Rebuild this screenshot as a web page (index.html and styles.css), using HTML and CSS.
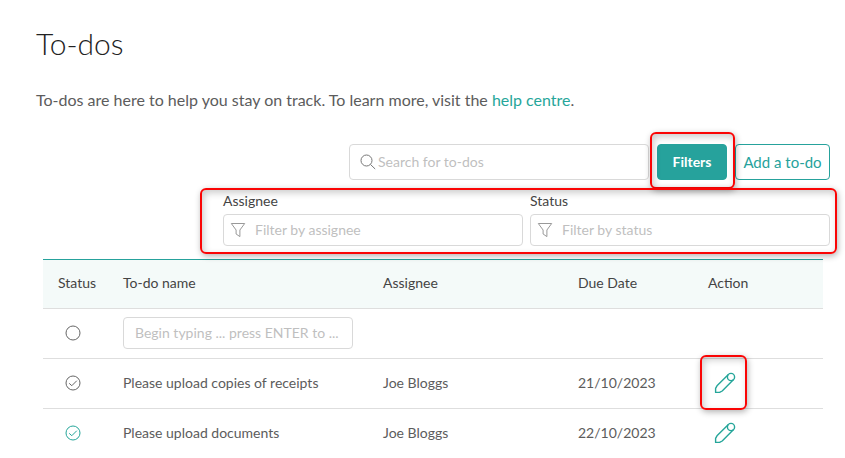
FILE: index.html
```html
<!DOCTYPE html>
<html lang="en">
<head>
  <meta charset="UTF-8" />
  <meta name="viewport" content="width=device-width, initial-scale=1.0"/>
  <title>To-dos</title>
  <link rel="stylesheet" href="styles.css">
</head>
<body>
  <!-- Shared icons -->
  <svg class="icon-defs" aria-hidden="true">
    <symbol id="funnel" viewBox="0 0 16 16">
      <path d="M1.3 1.5h13.4L9.9 8v6.6L6.1 12V8z" />
    </symbol>
    <symbol id="done" viewBox="0 0 16 16">
      <circle cx="8" cy="8" r="7" />
      <path d="M4.2 8.3l2.6 2.4 5-5" />
    </symbol>
    <symbol id="pencil" viewBox="0 0 22 22">
      <circle cx="17" cy="5" r="3.6" />
      <path d="M14.4 2.4L3 13.8 1.6 16.4v4h4L8.200 19 19.600 7.600" />
    </symbol>
  </svg>

  <div class="page">
    <h1>To-dos</h1>
    <p class="intro">To-dos are here to help you stay on track. To learn more, visit the <a href="#help">help centre</a>.</p>

    <div class="toolbar">
      <div class="field search">
        <svg class="icon" viewBox="0 0 16 16"><circle cx="6.5" cy="6.5" r="5.5" /><path d="M10.5 10.5l4.7 4.5" /></svg>
        <input type="search" placeholder="Search for to-dos" aria-label="Search for to-dos">
      </div>
      <div class="highlight highlight-button">
        <button class="btn btn-solid">Filters</button>
      </div>
      <button class="btn btn-outline">Add a to-do</button>
    </div>

    <div class="filters highlight highlight-filters">
      <div class="filter">
        <label for="assignee">Assignee</label>
        <div class="field">
          <svg class="icon"><use href="#funnel" /></svg>
          <input type="text" id="assignee" placeholder="Filter by assignee">
        </div>
      </div>
      <div class="filter">
        <label for="status">Status</label>
        <div class="field">
          <svg class="icon"><use href="#funnel" /></svg>
          <input type="text" id="status" placeholder="Filter by status">
        </div>
      </div>
    </div>

    <table>
      <thead>
        <tr>
          <th class="col-status">Status</th>
          <th class="col-name">To-do name</th>
          <th class="col-assignee">Assignee</th>
          <th class="col-date">Due Date</th>
          <th class="col-action">Action</th>
        </tr>
      </thead>
      <tbody>
        <tr>
          <td><button class="status" aria-label="New to-do"><svg viewBox="0 0 16 16"><circle cx="8" cy="8" r="7" /></svg></button></td>
          <td><div class="field new-todo"><input type="text" placeholder="Begin typing ... press ENTER to ..." aria-label="New to-do name"></div></td>
          <td></td>
          <td></td>
          <td></td>
        </tr>
        <tr>
          <td><button class="status" aria-label="Open"><svg><use href="#done" /></svg></button></td>
          <td>Please upload copies of receipts</td>
          <td>Joe Bloggs</td>
          <td>21/10/2023</td>
          <td><div class="highlight highlight-edit"><button class="edit" aria-label="Edit"><svg><use href="#pencil" /></svg></button></div></td>
        </tr>
        <tr>
          <td><button class="status complete" aria-label="Complete"><svg><use href="#done" /></svg></button></td>
          <td>Please upload documents</td>
          <td>Joe Bloggs</td>
          <td>22/10/2023</td>
          <td><button class="edit" aria-label="Edit"><svg><use href="#pencil" /></svg></button></td>
        </tr>
      </tbody>
    </table>
  </div>
</body>
</html>
```
FILE: styles.css
```css
* {
  box-sizing: border-box;
}

body {
  margin: 0;
  background: #fff;
  color: #5c5c5c;
  font-family: Lato, "Liberation Sans", sans-serif;
  font-size: 14px;
  line-height: 20px;
}

.page {
  padding: 26px 15px 0 36px;
}

h1 {
  margin: 0;
  color: #222;
  font-size: 30px;
  font-weight: 300;
  line-height: 34px;
}

.intro {
  margin: 28px 0 32px;
  font-size: 16px;
  line-height: 24px;
}

a {
  color: #26a69a;
  text-decoration: none;
}

button,
input {
  font: inherit;
}

svg {
  fill: none;
  stroke: currentColor;
}

.icon-defs {
  display: none;
}

.toolbar {
  display: flex;
  justify-content: flex-end;
  gap: 8px;
}

.field {
  display: flex;
  align-items: center;
  gap: 8px;
  height: 32px;
  padding: 0 6px;
  border: 1px solid #d9d9d9;
  border-radius: 4px;
  background: #fff;
}

.field input {
  flex: 1;
  min-width: 0;
  padding: 0;
  border: 0;
  outline: 0;
  background: none;
  color: #5c5c5c;
}

.field input::placeholder {
  color: #bfbfbf;
  opacity: 1;
}

.icon {
  flex: none;
  width: 16px;
  height: 16px;
  color: #999;
}

.search {
  width: 300px;
  height: 36px;
  padding: 0 10px;
  gap: 2px;
}

.search .icon {
  color: #777;
}

.btn {
  height: 36px;
  border: 1px solid #26a29c;
  border-radius: 4px;
  padding: 0;
  white-space: nowrap;
}

.btn-solid {
  width: 70px;
  background: #26a29c;
  color: #fff;
  font-weight: 700;
}

.btn-outline {
  width: 95px;
  background: #fff;
  color: #26a29c;
  font-size: 15px;
}

.filters {
  display: flex;
  justify-content: flex-end;
  gap: 7px;
  margin: 11px 0 13px auto;
  width: fit-content;
}

.filter {
  width: 300px;
}

.filter label {
  display: block;
  margin-bottom: 3px;
  color: #444;
}

.filter .icon {
  margin-right: 1px;
}

/* Red callout frames */
.highlight {
  position: relative;
}

.highlight::after {
  content: "";
  position: absolute;
  z-index: 1;
  border: 2px solid #fa0505;
  border-radius: 6px;
  box-shadow: 1px 2px 6px rgba(0,0,0,0.3), inset 2px 3px 7px rgba(0,0,0,0.2);
  pointer-events: none;
}

.highlight-button::after {
  inset: -12px -8px -9px -7px;
}

.highlight-filters::after {
  inset: -3px -7px -8px -23px;
}

.highlight-edit::after {
  inset: -17px -5px -16px -8px;
}

.highlight-edit {
  width: fit-content;
}

table {
  width: calc(100% - 14px);
  margin: 0 7px;
  border-collapse: collapse;
  table-layout: fixed;
}

th,
td {
  height: 50px;
  padding: 0 15px 2px;
  border-bottom: 1px solid #dedede;
  text-align: left;
}

th {
  height: 49px;
  border-top: 1px solid #26a29c;
  background: #f4faf9;
  color: #444;
  font-weight: 400;
}

tbody tr:last-child td {
  border-bottom: 0;
}

.col-status {
  width: 65px;
}

.col-assignee {
  width: 195px;
}

.col-date,
.col-action {
  width: 130px;
}

.new-todo {
  padding: 0 11px;
}

.status,
.edit {
  display: flex;
  align-items: center;
  justify-content: center;
  width: 30px;
  height: 22px;
  padding: 0;
  border: 0;
  background: none;
  color: #666;
}

.status svg {
  width: 16px;
  height: 16px;
}

.status.complete {
  color: #26a69a;
}

.edit {
  width: 34px;
  color: #26a69a;
}

.edit svg {
  width: 22px;
  height: 22px;
  stroke-width: 1.4;
  stroke-linejoin: round;
}
```
